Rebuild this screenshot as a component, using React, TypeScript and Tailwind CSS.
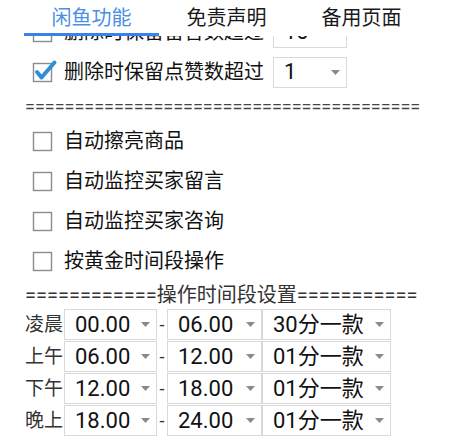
import React from 'react';

const FONT = { fontFamily: 'Roboto, "Noto Sans CJK SC", sans-serif' };

const Arrow = () => (
  <svg width="9" height="5" viewBox="0 0 9 5" className="shrink-0">
    <path d="M0 0 L9 0 L4.5 5 Z" fill="#8a8a8a" />
  </svg>
);

const Box = ({ checked = false }: { checked?: boolean }) => (
  <svg width="26" height="26" viewBox="0 0 26 26" className="shrink-0 -ml-[1px]">
    <rect x="1.5" y="4.5" width="18" height="18" fill="#fff" stroke="#8c8c8c" strokeWidth="1.4" />
    {checked && (
      <path d="M5 13 L9.5 18.5 L22.5 3.5" fill="none" stroke="#2f8fd6" strokeWidth="4" strokeLinecap="round" strokeLinejoin="round" />
    )}
  </svg>
);

const Select = ({ value, width, arrow = true }: { value: string; width: string; arrow?: boolean }) => (
  <div className={`${width} h-[31px] border border-[#d9d9d9] bg-white flex items-center justify-between pl-[10px] pr-[6px]`}>
    <span className="text-[22px] leading-none text-[#111]">{value}</span>
    {arrow && <Arrow />}
  </div>
);

const OptionRow = ({ label, checked, select }: { label: string; checked?: boolean; select?: string }) => (
  <div className="h-[40px] flex items-center pl-[33px]">
    <Box checked={checked} />
    <span className="ml-[6px] text-[20px] leading-none text-[#111] w-[209px]">{label}</span>
    {select && <Select value={select} width="w-[74px]" />}
  </div>
);

const TimeRow = ({ label, from, to, rate }: { label: string; from: string; to: string; rate: string }) => (
  <div className="h-[32px] flex items-start pl-[25px]">
    <span className="w-[39px] h-[31px] flex items-center text-[19px] leading-none text-[#333]">{label}</span>
    <Select value={from} width="w-[93px]" />
    <span className="w-[10px] h-[31px] flex items-center justify-center text-[18px] text-[#333]">-</span>
    <Select value={to} width="w-[95px]" />
    <Select value={rate} width="w-[129px]" />
  </div>
);

const tabs = ['闲鱼功能', '免责声明', '备用页面'];

export default function App() {
  return (
    <div className="w-[453px] h-[444px] bg-white overflow-hidden" style={FONT}>
      <div className="relative z-10 h-[36px] bg-white flex px-[24px]">
        {tabs.map((t, i) => (
          <div
            key={t}
            className={`w-[135px] h-[36px] flex items-center justify-center text-[20px] ${
              i === 0 ? 'text-[#4a8fe6] border-b-[3px] border-[#3b80ef] pt-[3px]' : 'text-[#1a1a1a]'
            }`}
          >
            {t}
          </div>
        ))}
      </div>
      <div className="h-[408px] overflow-hidden">
        <div className="-mt-[24px]">
          <OptionRow label="删除时保留留言数超过" select="10" />
          <OptionRow label="删除时保留点赞数超过" checked select="1" />
          <div className="h-[29px] flex items-center pl-[25px] text-[18px] leading-none text-[#444] whitespace-nowrap">
            {'========================================'}
          </div>
          <OptionRow label="自动擦亮商品" />
          <OptionRow label="自动监控买家留言" />
          <OptionRow label="自动监控买家咨询" />
          <OptionRow label="按黄金时间段操作" />
          <div className="h-[28px] flex items-center pl-[25px] text-[20px] leading-none text-[#333] whitespace-nowrap">
            {'============操作时间段设置==========='}
          </div>
          <TimeRow label="凌晨" from="00.00" to="06.00" rate="30分一款" />
          <TimeRow label="上午" from="06.00" to="12.00" rate="01分一款" />
          <TimeRow label="下午" from="12.00" to="18.00" rate="01分一款" />
          <TimeRow label="晚上" from="18.00" to="24.00" rate="01分一款" />
        </div>
      </div>
    </div>
  );
}
